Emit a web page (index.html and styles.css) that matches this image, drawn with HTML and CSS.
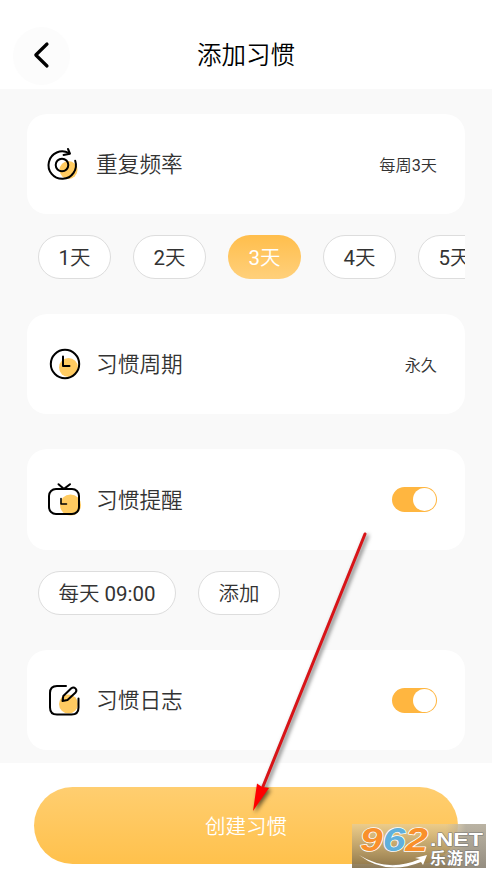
FILE: index.html
```html
<!DOCTYPE html>
<html lang="zh-CN">
<head>
<meta charset="utf-8">
<title>添加习惯</title>
<link rel="stylesheet" href="styles.css">
</head>
<body>
<div class="screen">
  <header class="header">
    <button class="back" aria-label="返回"><svg width="56" height="58" viewBox="0 0 56 58"><path d="M34 17L22.800 28L34 39"/></svg></button>
    <h1 class="title">添加习惯</h1>
  </header>
  <main class="content">
    <section class="card">
      <svg class="icon" viewBox="0 0 34 34"><circle class="spot" cx="22.500" cy="23" r="9"/><path d="M23 6.200A13.700 13.700 0 1 0 29.200 13.700"/><path d="M22 2l2 4.700-6.500 1.200"/><circle cx="16" cy="18" r="6.300"/></svg>
      <h2 class="label">重复频率</h2>
      <span class="value">每周<span class="num">3</span>天</span>
    </section>
    <div class="pills days">
      <span class="pill"><span class="num">1</span>天</span><span class="pill"><span class="num">2</span>天</span><span class="pill active"><span class="num">3</span>天</span><span class="pill"><span class="num">4</span>天</span><span class="pill"><span class="num">5</span>天</span>
    </div>
    <section class="card">
      <svg class="icon" viewBox="0 0 34 34"><circle class="spot" cx="22.500" cy="20.500" r="9.500"/><circle cx="19" cy="17" r="14.200"/><path d="M17 9.500V19h6.500"/></svg>
      <h2 class="label">习惯周期</h2>
      <span class="value">永久</span>
    </section>
    <section class="card reminder">
      <svg class="icon" viewBox="0 0 34 34"><circle class="spot" cx="24.500" cy="22" r="10.500"/><rect x="3" y="6" width="30" height="25" rx="7"/><path d="M12.500 1.200l5.500 4.700L24 1.200"/><path class="fine" d="M15 15.500v5.500h5.500"/></svg>
      <h2 class="label">习惯提醒</h2>
      <span class="switch"></span>
    </section>
    <div class="pills times">
      <span class="pill">每天 <span class="num">09:00</span></span><span class="pill">添加</span>
    </div>
    <section class="card">
      <svg class="icon" viewBox="0 0 34 34"><circle class="spot" cx="22.500" cy="21" r="9.500"/><path d="M20 3h-9q-7 0-7 7v14.500q0 7 7 7h14.500q7 0 7-7V15.500"/><path d="M16.500 18l.8-5 8-7.800c3-2.200 6.500 1.300 4.300 4.300L21.500 17z"/></svg>
      <h2 class="label">习惯日志</h2>
      <span class="switch"></span>
    </section>
  </main>
  <footer class="footer"><button class="create">创建习惯</button></footer>
  <svg class="arrow" viewBox="0 0 140 300">
    <path class="shaft" d="M125 14L22 269"/><path class="head" d="M13 291L17 263.500L22 267L29 268Z"/>
  </svg>
  <svg class="watermark" viewBox="0 0 134 44">
    <defs>
      <linearGradient id="plate" x2="0" y2="1"><stop stop-color="#e5cd98" stop-opacity=".75"/><stop offset="1" stop-color="#806c48" stop-opacity=".9"/></linearGradient>
      <linearGradient id="edge"><stop offset=".7" stop-color="#aaa" stop-opacity="0"/><stop offset=".85" stop-color="#999" stop-opacity=".6"/></linearGradient>
    </defs>
    <rect width="134" height="44" fill="url(#plate)"/><rect width="134" height="44" fill="url(#edge)"/>
    <path d="M7 31Q36 49 68 35l-5-1 12-3-4 10-2-3Q34 52 7 31z" fill="#fff"/>
    <text class="digits" x="8" y="27" textLength="68" lengthAdjust="spacingAndGlyphs"><tspan class="orange">9</tspan><tspan class="blue">6</tspan><tspan class="orange">2</tspan></text>
    <text class="net" x="78" y="22" textLength="53" lengthAdjust="spacingAndGlyphs">.NET</text>
    <text class="site" x="78" y="40" textLength="50">乐游网</text>
  </svg>
</div>
</body>
</html>
```
FILE: styles.css
```css
* { box-sizing: border-box; }
body {
  margin: 0;
  font-family: Roboto, "Noto Sans CJK SC", sans-serif;
  font-weight: 350;
  color: #333;
}
button { border: 0; padding: 0; font: inherit; }
h1, h2 { margin: 0; font-weight: 350; }
.num { font-weight: 400; }
.screen {
  position: relative;
  display: flex;
  flex-direction: column;
  width: 492px;
  height: 874px;
  overflow: hidden;
  background: #fff;
}
.header {
  display: grid;
  grid-template-columns: 58px 1fr 58px;
  align-items: center;
  height: 89px;
  padding: 24px 13px 2px;
}
.back {
  width: 57px;
  height: 58px;
  border-radius: 50%;
  background: #fcfcfc;
}
.back svg {
  display: block;
  fill: none;
  stroke: #000;
  stroke-width: 3.2;
  stroke-linecap: round;
  stroke-linejoin: round;
}
.title {
  text-align: center;
  font-size: 24.5px;
  line-height: 36px;
  color: #000;
}
.content {
  height: 674px;
  padding: 25px 27px 0;
  background: #f9f9f9;
}
.card {
  display: flex;
  align-items: center;
  height: 100px;
  padding: 0 28px 0 19px;
  border-radius: 20px;
  background: #fff;
}
.reminder { height: 101px; margin-top: 35px; }
.icon {
  width: 34px;
  height: 34px;
  margin-right: 16px;
  overflow: visible;
  fill: none;
  stroke: #000;
  stroke-width: 2;
  stroke-linecap: round;
  stroke-linejoin: round;
}
.spot { fill: #ffcb61; stroke: none; }
.fine { stroke-width: 1.6; }
.label { flex: 1; padding-top: 2px; font-size: 21.7px; line-height: 32px; }
.value { font-size: 16.2px; }
.pills {
  display: flex;
  gap: 22px;
  height: 100px;
  padding: 21px 0 35px 11px;
  overflow: hidden;
}
.pill {
  flex: none;
  height: 44px;
  border: 1px solid #ddd;
  border-radius: 22px;
  background: #fff;
  font-size: 20.5px;
  line-height: 44px;
  text-align: center;
  white-space: nowrap;
}
.days .pill { width: 73px; }
.times .pill { width: 82px; }
.times .pill:first-child { width: 138px; }
.pills .active {
  border-color: transparent;
  background: linear-gradient(#ffbe4c, #ffd07b) border-box;
  color: #fff;
}
.switch {
  display: flex;
  justify-content: flex-end;
  width: 45px;
  height: 25px;
  padding: 1px;
  border-radius: 13px;
  background: #ffb640;
}
.switch::after {
  content: "";
  width: 23px;
  height: 23px;
  border-radius: 50%;
  background: #fff;
}
.footer { padding: 24px 34px 10px; }
.create {
  width: 424px;
  height: 77px;
  padding-bottom: 2px;
  border-radius: 39px;
  background: linear-gradient(#ffce70, #ffc14c);
  color: #fff;
  font-size: 20.5px;
}
.arrow {
  position: absolute;
  left: 240px;
  top: 520px;
  width: 140px;
  height: 300px;
  filter: drop-shadow(2px 2px 2px rgba(0, 0, 0, .6));
}
.shaft { stroke: #d81418; stroke-width: 3; stroke-linecap: round; }
.head { fill: #f00; }
.watermark { position: absolute; left: 352px; top: 824px; width: 134px; height: 44px; }
.watermark text {
  stroke: #fff;
  stroke-width: 2px;
  paint-order: stroke;
  stroke-linejoin: round;
}
.watermark .digits { font: italic bold 33px "Liberation Sans", sans-serif; stroke-width: 1.5px; }
.orange { fill: #f9902c; }
.blue { fill: #60b0dc; }
.watermark .net { font: bold 19px "Liberation Sans", sans-serif; fill: #fff; stroke: #777; stroke-width: 1px; }
.watermark .site { font: bold 16px "Noto Sans CJK SC", sans-serif; fill: #fff; stroke: #777; stroke-width: 1px; }
```
